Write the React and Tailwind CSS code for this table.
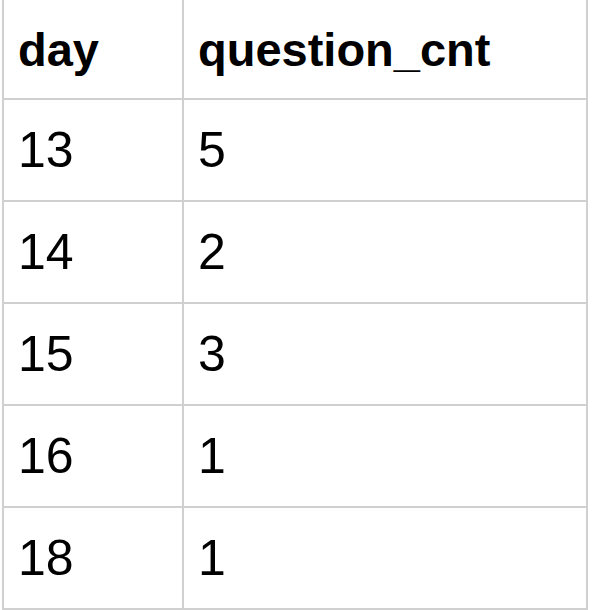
import React from 'react';

const rows = [
  ['13', '5'],
  ['14', '2'],
  ['15', '3'],
  ['16', '1'],
  ['18', '1'],
];

export default function App() {
  return (
    <div className="w-[592px] h-[610px] bg-white overflow-hidden" style={{ fontFamily: '"Liberation Sans", Arial, sans-serif' }}>
      <div className="ml-[2px] w-[586px] border-x-2 border-[#d0d0d0] text-black">
        <div className="flex h-[100px] border-b-2 border-[#d0d0d0] text-[47px] font-bold">
          <div className="w-[180px] shrink-0 border-r-2 border-[#d0d0d0] flex items-center pt-[2px] px-[14px]">day</div>
          <div className="flex-1 flex items-center pt-[2px] px-[14px]">question_cnt</div>
        </div>
        {rows.map(([day, cnt]) => (
          <div key={day} className="flex h-[102px] border-b-2 border-[#d0d0d0] text-[50px]">
            <div className="w-[180px] shrink-0 border-r-2 border-[#d0d0d0] flex items-center px-[14px]">{day}</div>
            <div className="flex-1 flex items-center px-[14px]">{cnt}</div>
          </div>
        ))}
      </div>
    </div>
  );
}
